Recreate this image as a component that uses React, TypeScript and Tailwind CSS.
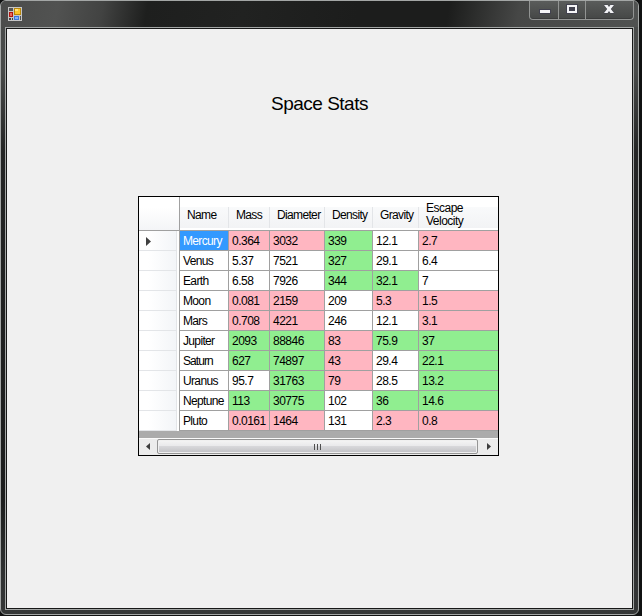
import React from "react";

const GRID =
  "grid grid-cols-[41px_49px_41px_55px_48px_46px_79px]";

const columns = ["Name", "Mass", "Diameter", "Density", "Gravity", "Escape Velocity"];

// Tone per value: b = selected, r = low, g = high, w = neutral
const rows: { cells: string[]; tones: string }[] = [
  { cells: ["Mercury", "0.364", "3032", "339", "12.1", "2.7"], tones: "brrgwr" },
  { cells: ["Venus", "5.37", "7521", "327", "29.1", "6.4"], tones: "wwwgww" },
  { cells: ["Earth", "6.58", "7926", "344", "32.1", "7"], tones: "wwwggw" },
  { cells: ["Moon", "0.081", "2159", "209", "5.3", "1.5"], tones: "wrrwrr" },
  { cells: ["Mars", "0.708", "4221", "246", "12.1", "3.1"], tones: "wrrwwr" },
  { cells: ["Jupiter", "2093", "88846", "83", "75.9", "37"], tones: "wggrgg" },
  { cells: ["Saturn", "627", "74897", "43", "29.4", "22.1"], tones: "wggrwg" },
  { cells: ["Uranus", "95.7", "31763", "79", "28.5", "13.2"], tones: "wwgrwg" },
  { cells: ["Neptune", "113", "30775", "102", "36", "14.6"], tones: "wggwgg" },
  { cells: ["Pluto", "0.0161", "1464", "131", "2.3", "0.8"], tones: "wrrwrr" },
];

const toneClass: Record<string, string> = {
  b: "bg-[#3399ff] text-white",
  r: "bg-[#ffb6c1]",
  g: "bg-[#90ee90]",
  w: "bg-white",
};

function AppIcon() {
  return (
    <svg width="14" height="14" viewBox="0 0 14 14" shapeRendering="crispEdges">
      <rect width="14" height="14" fill="#c6c6c6" />
      <rect x="1" y="1" width="4" height="3" fill="#555" />
      <rect x="1" y="5" width="4" height="5" fill="#b3160f" />
      <rect x="2" y="6" width="2" height="3" fill="#e8685c" />
      <rect x="1" y="11" width="2" height="2" fill="#444" />
      <rect x="4" y="11" width="1" height="2" fill="#444" />
      <rect x="6" y="1" width="7" height="7" fill="#b8860b" />
      <rect x="7" y="2" width="5" height="5" fill="#fbc52c" />
      <rect x="7" y="2" width="3" height="2" fill="#ffe27a" />
      <rect x="6" y="9" width="5" height="4" fill="#3c78dc" />
      <rect x="7" y="10" width="3" height="2" fill="#82b1ff" />
      <rect x="12" y="9" width="1" height="4" fill="#555" />
    </svg>
  );
}

function CaptionButtons() {
  return (
    <div className="mr-[4px] flex h-[19px] w-[105px] rounded-b-[4px] border border-t-0 border-[#929493] bg-gradient-to-b from-[#5a5c5b] to-[#454746] shadow-[inset_0_-1px_0_#3a3b3b]">
      <div className="w-[29px] border-r border-[#929493]">
        <svg width="28" height="18" viewBox="0 0 28 18" shapeRendering="crispEdges">
          <rect x="9" y="8" width="12" height="5" fill="#42424f" />
          <rect x="10" y="9" width="10" height="3" fill="#f4f4f6" />
        </svg>
      </div>
      <div className="w-[27px] border-r border-[#929493]">
        <svg width="26" height="18" viewBox="0 0 26 18" shapeRendering="crispEdges">
          <rect x="7" y="3" width="12" height="10" fill="#42424f" />
          <path fillRule="evenodd" fill="#f4f4f6" d="M8 4h10v8H8zM10 6v4h6V6z" />
        </svg>
      </div>
      <div className="flex-1">
        <svg width="47" height="18" viewBox="0 0 47 18">
          <path
            d="M18 4h3.6L23 6.1 24.4 4H28L24.8 8 28 12H24.4L23 9.9 21.6 12H18L21.2 8z"
            fill="#f4f4f6"
            stroke="#42424f"
            strokeWidth="1"
            paintOrder="stroke"
          />
        </svg>
      </div>
    </div>
  );
}

function HeaderRow() {
  return (
    <div className={`${GRID} h-[34px] border-b border-[#a0a0a0] bg-white tracking-[-0.65px]`}>
      <div className="border-r border-[#a0a0a0] bg-gradient-to-b from-white from-30% to-[#f4f5f7]" />
      {columns.map((c, i) => (
        <div
          key={c}
          className="flex flex-col bg-white pt-[10px] pb-[2px]"
        >
          <div
            className={`flex h-[21px] items-center bg-gradient-to-b from-[#f9fafb] to-[#f2f3f5] pl-[7px] leading-[13px] ${
              i < 5 ? "border-r border-[#e3e5e8]" : ""
            }`}
          >
            <span className={i === 5 ? "relative -top-[3px] w-[50px] tracking-[-0.5px]" : "relative -top-[2px]"}>{c}</span>
          </div>
        </div>
      ))}
    </div>
  );
}

function DataRow({ cells, tones, current }: { cells: string[]; tones: string; current: boolean }) {
  return (
    <div className={`${GRID} h-[20px]`}>
      <div className="flex border-r border-[#a0a0a0] bg-white">
        <div className="flex h-[20px] w-[38px] items-center border-r border-b border-[#e3e5e8] bg-gradient-to-r from-white from-25% to-[#f3f5f8] pt-px pl-[7px]">
          {current && (
            <svg width="5" height="9" viewBox="0 0 5 9">
              <path d="M0 0L5 4.5 0 9z" fill="#404040" />
            </svg>
          )}
        </div>
      </div>
      {cells.map((v, i) => (
        <div
          key={i}
          className={`h-[20px] border-b border-[#a0a0a0] pl-[3px] leading-[20px] whitespace-nowrap ${i < 5 ? "border-r" : ""} ${
            i > 0 ? "" : v === "Saturn" ? "tracking-[-0.95px]" : "tracking-[-0.65px]"
          } ${toneClass[tones[i]]}`}
        >
          {v}
        </div>
      ))}
    </div>
  );
}

function ScrollBar() {
  return (
    <div className="flex h-[17px] items-start border-t border-[#fafafa] bg-[#ececec]">
      <div className="flex h-[15px] w-[18px] items-center justify-center">
        <svg width="4" height="7" viewBox="0 0 4 7">
          <path d="M4 0L0 3.5 4 7z" fill="#3c3c3c" />
        </svg>
      </div>
      <div className="flex h-[15px] w-[321px] items-center justify-center gap-[2px] rounded-[2px] border border-[#959595] bg-[linear-gradient(#f5f5f5_0%,#e9e9eb_45%,#d7d7da_50%,#c1c1c5_100%)] shadow-[inset_0_0_0_1px_#f0f0f0]">
        <div className="h-[6px] w-px bg-[#4f4f4f]" />
        <div className="h-[6px] w-px bg-[#4f4f4f]" />
        <div className="h-[6px] w-px bg-[#4f4f4f]" />
      </div>
      <div className="flex h-[15px] flex-1 items-center justify-center pl-[2px]">
        <svg width="4" height="7" viewBox="0 0 4 7">
          <path d="M0 0L4 3.5 0 7z" fill="#3c3c3c" />
        </svg>
      </div>
    </div>
  );
}

export default function App() {
  return (
    <div className="h-[616px] w-[642px] overflow-hidden bg-[#101111] pb-[1px] font-['Liberation_Sans',Arial,sans-serif] text-black">
      <div className="flex h-[615px] w-[639px] flex-col rounded-[6px] border border-[#a3a6a5] bg-[linear-gradient(#4a4c4b_0px,#484a49_70px,#242525_150px,#1c1d1d_500px,#303232_575px,#353737_100%)] pr-[4px] pb-[4px] pl-[4px]">
        <div className="-mx-[4px] flex h-[26px] items-start justify-between rounded-t-[5px] bg-[linear-gradient(100deg,#4b4c4b_0%,#515251_9%,#424342_16%,#1e1f1e_23%,#212221_38%,#1c1d1c_56%,#1c1d1c_70%,#464746_81%,#505251_100%)] pl-[7px]">
          <div className="pt-[6px]">
            <AppIcon />
          </div>
          <CaptionButtons />
        </div>
        <main className="flex flex-1 flex-col items-center border border-[#a3a6a5] bg-[#f0f0f0] shadow-[inset_0_0_0_1px_#171818]">
          <h1 className="mt-[64px] h-[24px] text-[19px] leading-[24px] tracking-[-0.5px]">
            Space Stats
          </h1>
          <section className="mt-[80px] mr-[2px] h-[260px] w-[361px] border border-black bg-[#ababab] text-[12px] tracking-[-0.5px]">
            <HeaderRow />
            {rows.map((r, i) => (
              <DataRow key={r.cells[0]} cells={r.cells} tones={r.tones} current={i === 0} />
            ))}
            <div className="h-[7px]" />
            <ScrollBar />
          </section>
        </main>
      </div>
    </div>
  );
}
